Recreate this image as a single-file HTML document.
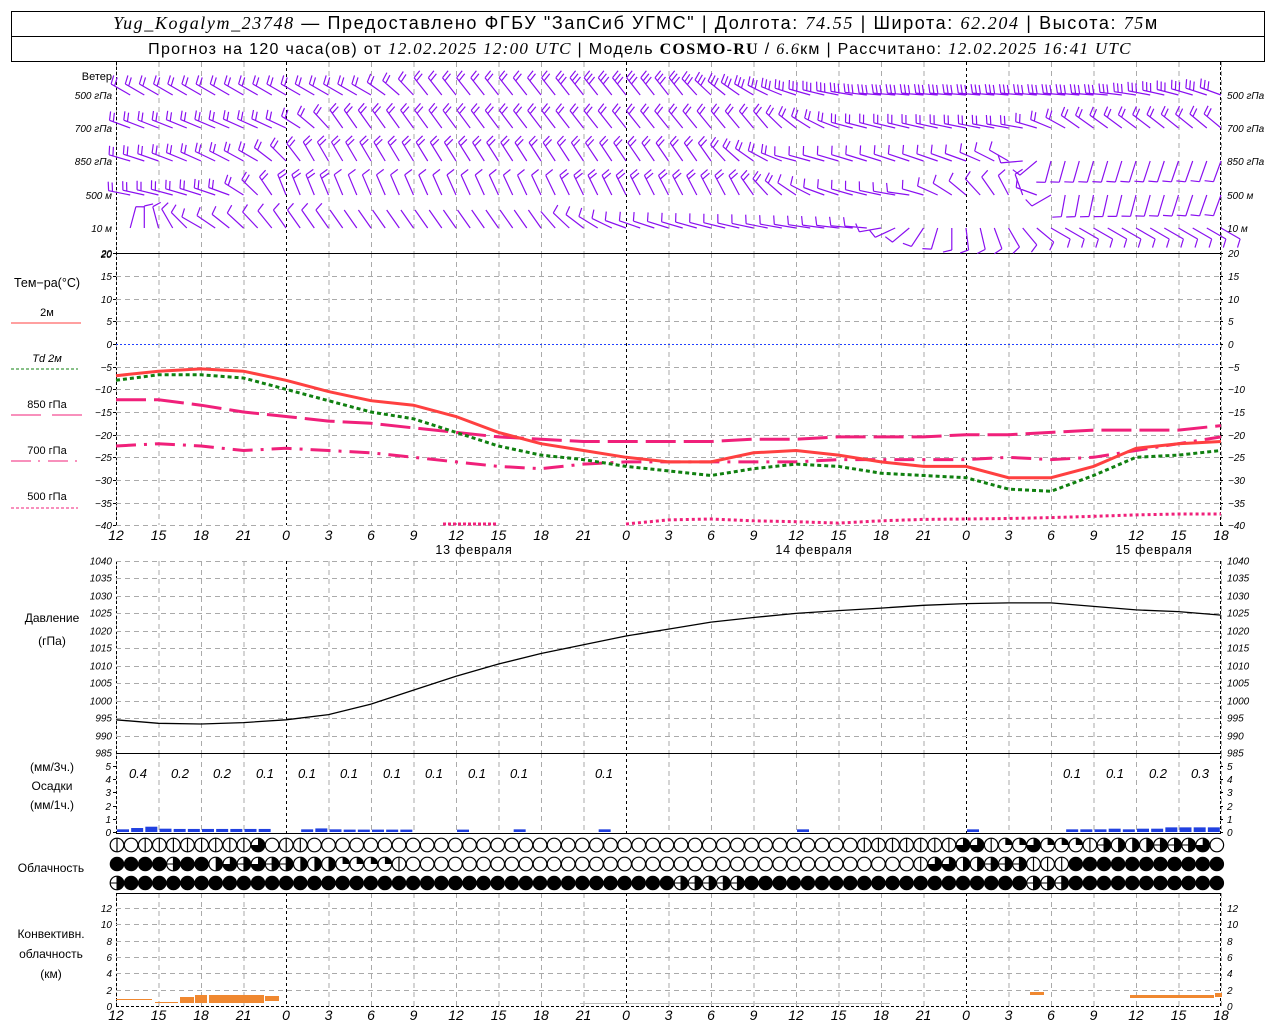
<!DOCTYPE html>
<html><head><meta charset="utf-8">
<style>
html,body{margin:0;padding:0;background:#fff;}
svg{display:block;font-family:"Liberation Sans",sans-serif;}
.ax{font-style:italic;font-size:10px;}
.xl{font-style:italic;font-size:14px;}
</style></head><body>
<svg id="s" width="1280" height="1024" viewBox="0 0 1280 1024" xmlns="http://www.w3.org/2000/svg">
<rect width="1280" height="1024" fill="#fff"/>
<rect x="11.5" y="11.5" width="1253" height="50" fill="none" stroke="#000"/>
<line x1="11" y1="36.5" x2="1265" y2="36.5" stroke="#000"/>
<text x="636" y="29" text-anchor="middle" font-size="18" letter-spacing="1.6"><tspan font-style="italic" font-family="Liberation Serif">Yug_Kogalym_23748</tspan> — Предоставлено ФГБУ "ЗапСиб УГМС" | Долгота: <tspan font-style="italic" font-family="Liberation Serif">74.55</tspan> | Широта: <tspan font-style="italic" font-family="Liberation Serif">62.204</tspan> | Высота: <tspan font-style="italic" font-family="Liberation Serif">75</tspan>м</text>
<text x="640" y="54" text-anchor="middle" font-size="16" letter-spacing="1.3">Прогноз на 120 часа(ов) от <tspan font-style="italic" font-family="Liberation Serif" font-size="17">12.02.2025 12:00 UTC</tspan> | Модель <tspan font-weight="bold" font-family="Liberation Serif">COSMO-RU</tspan> / <tspan font-style="italic" font-family="Liberation Serif">6.6</tspan>км | Рассчитано: <tspan font-style="italic" font-family="Liberation Serif" font-size="17">12.02.2025 16:41 UTC</tspan></text>
<g id="g"></g>
</svg>
<script>
var g=document.getElementById('g');var NS='http://www.w3.org/2000/svg';
function el(t,a,txt){var e=document.createElementNS(NS,t);for(var k in a)e.setAttribute(k,a[k]);if(txt!==undefined)e.textContent=txt;g.appendChild(e);return e;}
function X(h){return 116+h*42.5/3;}
var L=116,R=1220;
for(var i=0;i<=26;i++){var x=X(i*3)+0.5;var day=(i%8==4);
 [[62,253],[253,525],[561,753],[753,833],[893,1006]].forEach(function(p){
  el('line',{x1:x,y1:p[0],x2:x,y2:p[1],stroke:day?'#000':'#aaa','stroke-dasharray':day?'3,3':'5,4','stroke-width':1});});}
[L+0.5,R+0.5].forEach(function(x){[[62,525],[561,833],[893,1006]].forEach(function(p){el('line',{x1:x,y1:p[0],x2:x,y2:p[1],stroke:'#000','stroke-dasharray':'3,2'});});});
[253.5,753.5,833.5,893.5].forEach(function(y){el('line',{x1:L,y1:y,x2:R+1,y2:y,stroke:'#000'});});
function TY(t){return 344-t*4.533;}
for(var t=20;t>=-40;t-=5){var y=Math.round(TY(t))+0.5;
 if(t!=20&&t!=0)el('line',{x1:L,y1:y,x2:R,y2:y,stroke:'#aaa','stroke-dasharray':'5,4'});
 el('text',{x:L-4,y:y+3.5,'text-anchor':'end','class':'ax'},t==0?'0':String(t).replace('-','−'));
 el('text',{x:R+8,y:y+3.5,'class':'ax'},t==0?'0':String(t).replace('-','−'));
 el('line',{x1:L-3,y1:y,x2:L,y2:y,stroke:'#000'});el('line',{x1:R,y1:y,x2:R+3,y2:y,stroke:'#000'});}
el('line',{x1:L,y1:344.5,x2:R,y2:344.5,stroke:'#2040ff','stroke-dasharray':'2,2'});
function path(arr,f,h0){var d='';for(var i=0;i<arr.length;i++){d+=(i?'L':'M')+X((h0||0)+i*3).toFixed(1)+','+f(arr[i]).toFixed(1);}return d;}
var T2=[-7,-6,-5.5,-6,-8,-10.5,-12.5,-13.5,-16,-19.5,-22,-23.5,-25,-26,-26,-24,-23.5,-24.5,-26,-27,-27,-29.5,-29.5,-27,-23,-22,-21.5];
var TD=[-8,-6.8,-6.8,-7.5,-10,-12.5,-15,-16.5,-19.5,-22.5,-24.5,-25.5,-27,-28,-29,-27.5,-26.5,-27,-28.5,-29,-29.5,-32,-32.5,-29,-25,-24.5,-23.5];
var T85=[-12.3,-12.3,-13.5,-15,-16,-17,-17.5,-18.5,-19.5,-20.5,-21,-21.5,-21.5,-21.5,-21.5,-21,-21,-20.5,-20.5,-20.5,-20,-20,-19.5,-19,-19,-19,-18];
var T70=[-22.5,-22,-22.5,-23.5,-23,-23.5,-24,-25,-26,-27,-27.5,-26.5,-26,-26,-26,-26,-26,-25.5,-25.5,-25.5,-25.5,-25,-25.5,-25,-23.5,-22,-20.5];
var T50=[-39.7,-38.8,-38.6,-39,-39.2,-39.5,-39,-38.7,-38.6,-38.5,-38.3,-38,-37.7,-37.5,-37.5];
el('path',{d:path(T85,TY),fill:'none',stroke:'#f0207a','stroke-width':3,'stroke-dasharray':'30,8'});
el('path',{d:path(T70,TY),fill:'none',stroke:'#f0207a','stroke-width':3,'stroke-dasharray':'20,8,3,8'});
el('path',{d:path(T50,TY,36),fill:'none',stroke:'#f0207a','stroke-width':3,'stroke-dasharray':'3,3'});
el('path',{d:'M443,524L497,524',fill:'none',stroke:'#f0207a','stroke-width':3,'stroke-dasharray':'3,2'});
el('path',{d:path(TD,TY),fill:'none',stroke:'#108010','stroke-width':3,'stroke-dasharray':'4,3'});
el('path',{d:path(T2,TY),fill:'none',stroke:'#ff4040','stroke-width':3});
el('text',{x:47,y:287,'text-anchor':'middle','font-size':12.5},'Тем−ра(°C)');
el('text',{x:47,y:316,'text-anchor':'middle','font-size':11},'2м');
el('line',{x1:11,y1:323,x2:81,y2:323,stroke:'#ff4040'});
el('text',{x:47,y:362,'text-anchor':'middle','font-size':11,'font-style':'italic'},'Td  2м');
el('line',{x1:11,y1:369,x2:78,y2:369,stroke:'#108010','stroke-dasharray':'3,2'});
el('text',{x:47,y:408,'text-anchor':'middle','font-size':11},'850 гПа');
el('line',{x1:11,y1:415,x2:41,y2:415,stroke:'#f0207a'});el('line',{x1:52,y1:415,x2:82,y2:415,stroke:'#f0207a'});
el('text',{x:47,y:454,'text-anchor':'middle','font-size':11},'700 гПа');
el('path',{d:'M11,461H31M38,461H40M48,461H68M75,461H77',stroke:'#f0207a'});
el('text',{x:47,y:500,'text-anchor':'middle','font-size':11},'500 гПа');
el('line',{x1:11,y1:508,x2:78,y2:508,stroke:'#f0207a','stroke-dasharray':'3,2'});
function xlabels(y){for(var i=0;i<=26;i++){var h=(12+i*3)%24;el('text',{x:X(i*3),y:y,'text-anchor':'middle','class':'xl'},String(h));}}
xlabels(540);xlabels(1020);
el('text',{x:474,y:554,'text-anchor':'middle','font-size':12.5,'letter-spacing':'0.8'},'13 февраля');
el('text',{x:814,y:554,'text-anchor':'middle','font-size':12.5,'letter-spacing':'0.8'},'14 февраля');
el('text',{x:1154,y:554,'text-anchor':'middle','font-size':12.5,'letter-spacing':'0.8'},'15 февраля');
function PY(p){return 561+(1040-p)*3.49;}
for(var p=1040;p>=985;p-=5){var y=Math.round(PY(p))+0.5;
 if(p!=985)el('line',{x1:L,y1:y,x2:R,y2:y,stroke:'#aaa','stroke-dasharray':'5,4'});
 el('text',{x:L-4,y:y+3,'text-anchor':'end','class':'ax','font-size':9},p);
 el('text',{x:R+7,y:y+3,'class':'ax','font-size':9},p);}
var PR=[994.5,993.5,993.3,993.7,994.5,996,999,1003,1007,1010.5,1013.5,1016,1018.5,1020.5,1022.5,1023.8,1025,1025.8,1026.5,1027.3,1027.8,1028,1028,1027,1026,1025.5,1024.5];
el('path',{d:path(PR,PY),fill:'none',stroke:'#000','stroke-width':1.3});
el('text',{x:52,y:622,'text-anchor':'middle','font-size':12},'Давление');
el('text',{x:52,y:645,'text-anchor':'middle','font-size':12},'(гПа)');
function RY(v){return 832-v*13.2;}
for(var v=0;v<=5;v++){var y=Math.round(RY(v))+0.5;el('text',{x:L-5,y:y+3.5,'text-anchor':'end','class':'ax'},v);el('text',{x:R+7,y:y+3.5,'class':'ax'},v);
 el('line',{x1:L-3,y1:y,x2:L,y2:y,stroke:'#000'});el('line',{x1:R,y1:y,x2:R+3,y2:y,stroke:'#000'});}
var pv=[[0,.05],[1,.15],[2,.25],[3,.1],[4,.08],[5,.08],[6,.08],[7,.08],[8,.08],[9,.08],[10,.08],[13,.05],[14,.12],[15,.05],[16,.03],[17,.03],[18,.03],[19,.03],[20,.03],[24,.03],[28,.05],[34,.05],[48,.05],[60,.05],[67,.05],[68,.05],[69,.05],[70,.1],[71,.05],[72,.1],[73,.1],[74,.2],[75,.2],[76,.2],[77,.2]];
pv.forEach(function(a){var x=X(a[0])+1;el('rect',{x:x,y:RY(a[1])-2,width:12,height:a[1]*13.2+2,fill:'#2040e0'});});
[[138,'0.4'],[180,'0.2'],[222,'0.2'],[265,'0.1'],[307,'0.1'],[349,'0.1'],[392,'0.1'],[434,'0.1'],[477,'0.1'],[519,'0.1'],[604,'0.1'],[1072,'0.1'],[1115,'0.1'],[1158,'0.2'],[1200,'0.3']].forEach(function(a){el('text',{x:a[0],y:778,'text-anchor':'middle','font-style':'italic','font-size':13},a[1]);});
el('text',{x:52,y:771,'text-anchor':'middle','font-size':12},'(мм/3ч.)');
el('text',{x:52,y:790,'text-anchor':'middle','font-size':12},'Осадки');
el('text',{x:52,y:809,'text-anchor':'middle','font-size':12},'(мм/1ч.)');
el('text',{x:51,y:872,'text-anchor':'middle','font-size':12},'Облачность');
function cloud(cx,cy,t){var r=6.8;
 if(t=='f'){el('circle',{cx:cx,cy:cy,r:r+0.5,fill:'#000'});return;}
 el('circle',{cx:cx,cy:cy,r:r,fill:'#fff',stroke:'#000','stroke-width':1.2});
 if(t=='v')el('line',{x1:cx,y1:cy-r,x2:cx,y2:cy+r,stroke:'#000','stroke-width':1.2});
 if(t=='h'){el('path',{d:'M'+(cx)+','+(cy-r)+'A'+r+','+r+' 0 0 1 '+(cx)+','+(cy+r)+'Z',fill:'#000'});el('line',{x1:cx-r,y1:cy,x2:cx,y2:cy,stroke:'#000'});el('line',{x1:cx,y1:cy-r,x2:cx,y2:cy+r,stroke:'#000'});}
 if(t=='l')el('path',{d:'M'+cx+','+(cy-r)+'A'+r+','+r+' 0 0 1 '+cx+','+(cy+r)+'Z',fill:'#000'});
 if(t=='q')el('path',{d:'M'+cx+','+cy+'L'+cx+','+(cy-r)+'A'+r+','+r+' 0 1 1 '+(cx-r)+','+cy+'Z',fill:'#000'});
 if(t=='Q')el('path',{d:'M'+cx+','+cy+'L'+cx+','+(cy-r)+'A'+r+','+r+' 0 0 1 '+(cx+r)+','+cy+'Z',fill:'#000'});
}
var r1="vevvvvvvvvqevveeeeeeeeeeeeeeeeeeeeeeeeeeeeeeeeeeeeeeevvvvvvvqqvQQqQQQvhlllhhhq";
var r2="ffffhfflqhqhhlllQQQQveeeeeeeeeeeeeeeeeeeeeeeeeeeeeeeeeeeevqqllhhhvvvfffffffffffff";
var r3="hfffffffffffffffffffffffffffffffffffffffhhhhhffffffffffffffffffffhhhffffffffffff";
for(var h=0;h<=78;h++){var cx=117+h*14.1;cloud(cx,845,r1[h]||'e');cloud(cx,864,r2[h]||'f');cloud(cx,883,r3[h]||'f');}
function CY(v){return 1006-v*8.17;}
for(var v=0;v<=12;v+=2){var y=Math.round(CY(v))+0.5;if(v>0)el('line',{x1:L,y1:y,x2:R,y2:y,stroke:'#aaa','stroke-dasharray':'5,4'});
 el('text',{x:L-4,y:y+3.5,'text-anchor':'end','class':'ax'},v);el('text',{x:R+7,y:y+3.5,'class':'ax'},v);}
el('line',{x1:L,y1:1006.5,x2:R,y2:1006.5,stroke:'#000','stroke-dasharray':'3,2'});
[[116,152,999,1],[155,178,1002,1],[180,194,997,6],[195,207,995,8],[209,264,995,8],[265,279,996,5],[1030,1044,992,3],[1130,1214,995,3],[1215,1222,993,4]].forEach(function(a){el('rect',{x:a[0],y:a[2],width:a[1]-a[0],height:a[3],fill:'#f08830'});});
el('line',{x1:580,y1:1003.5,x2:890,y2:1003.5,stroke:'#bbb'});
el('text',{x:51,y:938,'text-anchor':'middle','font-size':12},'Конвективн.');
el('text',{x:51,y:958,'text-anchor':'middle','font-size':12},'облачность');
el('text',{x:51,y:978,'text-anchor':'middle','font-size':12},'(км)');
el('text',{x:112,y:80,'text-anchor':'end','font-size':11},'Ветер');
var rows=[[95,'500 гПа'],[128,'700 гПа'],[161,'850 гПа'],[195,'500  м'],[228,'10   м']];
rows.forEach(function(r){el('text',{x:112,y:r[0]+4,'text-anchor':'end','class':'ax','font-size':11},r[1]);el('text',{x:1227,y:r[0]+4,'class':'ax','font-size':11},r[1]);});
el('text',{x:112,y:258,'text-anchor':'end','class':'ax'},'20');
var kf=[
 [[0,-150],[18,-150],[22,-128],[40,-128],[48,-162],[54,-175],[70,-175],[78,-160]],
 [[0,-160],[12,-155],[16,-125],[46,-130],[52,-165],[64,-170],[68,-145],[78,-140]],
 [[0,-165],[10,-150],[14,-120],[42,-125],[48,-165],[60,-160],[63,-150],[66,-255],[78,-250]],
 [[0,-170],[8,-160],[12,-112],[44,-118],[50,-160],[56,-172],[60,-140],[64,-110],[67,-260],[78,-250]],
 [[0,-60],[6,-150],[12,-125],[30,-125],[36,-160],[53,-175],[56,-220],[59,-270],[62,-290],[66,-330],[78,-330]]];
var nt=[[2,2,3,3,3],[2,2,2,2,2],[2,2,2,1,1],[2,1,2,1,1],[1,0,1,1,1]];
function ang(k,h){for(var i=1;i<k.length;i++){if(h<=k[i][0]){var a=k[i-1],b=k[i];var f=(h-a[0])/(b[0]-a[0]);return a[1]+(b[1]-a[1])*f;}}return k[k.length-1][1];}
var d='';
rows.forEach(function(r,ri){for(var h=1;h<=78;h++){var a=ang(kf[ri],h)*Math.PI/180;var bx=X(h),by=r[0];
 var len=22;var c=Math.cos(a),s=Math.sin(a);var tx=bx+c*len,ty=by+s*len;d+='M'+bx.toFixed(1)+','+by+'L'+tx.toFixed(1)+','+ty.toFixed(1);
 var n=nt[ri][Math.min(4,Math.floor(h/16))];var pa=a+Math.PI/2*0.85;var pc=Math.cos(pa),ps=Math.sin(pa);
 for(var j=0;j<n;j++){var sx=tx-c*j*4,sy=ty-s*j*4;d+='M'+sx.toFixed(1)+','+sy.toFixed(1)+'l'+(pc*9).toFixed(1)+','+(ps*9).toFixed(1);}}});
el('path',{d:d,fill:'none',stroke:'#8a10f0','stroke-width':1.2});
</script>
</body></html>
